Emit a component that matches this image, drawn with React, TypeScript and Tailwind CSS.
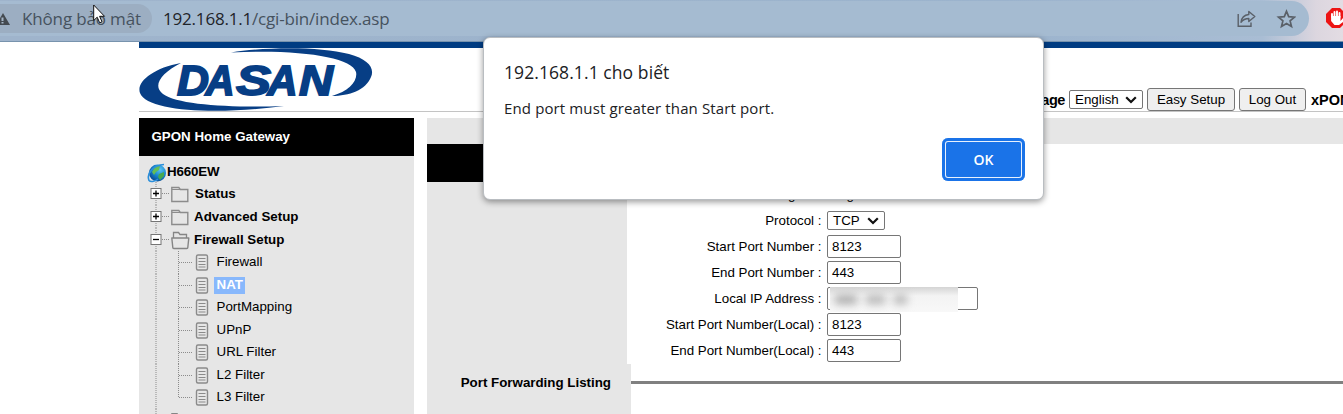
import React from "react";

const UI = "font-['Open_Sans','Noto_Sans',sans-serif]";

function DasanLogo() {
  return (
    <svg width="234" height="63" viewBox="0 0 234 63" className="block shrink-0">
      <g fill="#073e85">
        <path d="M92 4.500C125 -1 180 -2 210 6C229 11 236 20 232 29C227 42 210 48 193 48C210 43 219 33 217 24C213 9 160 1 92 4.500Z" />
        <path d="M42 15C14 20 -3 34 1 45C8 64 80 67 145 58C95 60 38 57 24 46C13 38 22 25 42 15Z" />
        <text
          y="46.500"
          fontFamily="Liberation Sans, sans-serif"
          fontWeight="700"
          fontStyle="italic"
          fontSize="43"
          stroke="#073e85"
          strokeWidth="1.800"
        >
          <tspan x="38" textLength="32" lengthAdjust="spacingAndGlyphs">D</tspan>
          <tspan x="66.500" textLength="29" lengthAdjust="spacingAndGlyphs">A</tspan>
          <tspan x="97" textLength="35" lengthAdjust="spacingAndGlyphs">S</tspan>
          <tspan x="128.500" textLength="30" lengthAdjust="spacingAndGlyphs">A</tspan>
          <tspan x="160" textLength="34" lengthAdjust="spacingAndGlyphs">N</tspan>
        </text>
      </g>
    </svg>
  );
}

function Toolbar() {
  return (
    <div className={`flex h-[42px] shrink-0 items-start border-b border-[#7893ad] bg-[linear-gradient(90deg,#9fb4cc_0%,#9bb3cd_75%,#a9bdd4_94%,#dcd6df_98%,#e3dce3_100%)] pt-px ${UI}`}>
      <div className="flex h-[35px] w-[1309px] items-center rounded-r-full bg-[#a5bbd1]">
        <div className="flex h-[29px] w-[152px] items-center rounded-r-full bg-[#9caec2] text-[#46525e]">
          <svg width="10" height="12" viewBox="0 0 10 12" className="block">
            <path d="M3 0L10 12H-4Z" fill="#444a50" />
            <path d="M1.500 4.500h2v3.500h-2zM1.500 9h2v1.500h-2z" fill="#a5b5c6" />
          </svg>
          <span className="ml-3 whitespace-nowrap text-[17px] leading-none tracking-[-0.15px]">Không bảo mật</span>
        </div>
        <span className="ml-[11px] whitespace-nowrap text-[17px] leading-none tracking-[-0.19px] text-[#46525e]">
          <span className="text-[#1f2429]">192.168.1.1</span>/cgi-bin/index.asp
        </span>
        <div className="ml-auto mr-[13px] flex items-center gap-[20px]">
          <svg width="20" height="18" viewBox="0 0 20 18" fill="none" stroke="#5a6068" strokeWidth="1.400">
            <path d="M2.200 4V16.300H15V12.500" />
            <path d="M12.800 1.500L18.800 6.500L12.800 11.500V8.500C9 8.500 6.800 9.800 5 12.300C5.500 8 8 5 12.800 4.500Z" strokeLinejoin="round" />
          </svg>
          <svg width="20" height="20" viewBox="0 0 20 20" fill="none" stroke="#5a6068" strokeWidth="1.700">
            <path d="M10.500 2.300L12.700 7.600L18.500 8.100L14.100 11.900L15.500 17.500L10.500 14.500L5.500 17.500L6.900 11.900L2.500 8.100L8.300 7.600Z" />
          </svg>
        </div>
      </div>
      <svg width="17" height="20" viewBox="0 0 17 20" className="ml-[17px] mt-[7px] shrink-0">
        <path d="M6 0H14L20 6V14L14 20H6L0 14V6Z" fill="#ed1414" />
        <path d="M6 9V6M8.500 9V4M11 9V3.500M13.500 9V5" stroke="#fff" strokeWidth="1.900" strokeLinecap="round" />
        <path d="M5.100 8H14.500V13L17 10V14L13 17H8.500L5.100 13Z" fill="#fff" />
      </svg>
    </div>
  );
}

type Kind = "plus" | "minus" | "leaf";

function Gutter({ kind, height, last }: { kind: Kind; height: number; last?: boolean }) {
  const c = Math.floor(height / 2);
  const dot = { stroke: "#8c8c8c", strokeDasharray: "1 1" };
  return (
    <svg width="74" height={height} viewBox={`0 0 74 ${height}`} fill="none" className="block shrink-0">
      <path d={`M17 0V${height}`} {...dot} />
      {kind === "leaf" ? (
        <>
          <path d={`M39.500 0V${last ? c + 1 : height}`} {...dot} />
          <path d={`M40 ${c + 0.5}H53`} {...dot} />
          <rect x="57.500" y={c - 7} width="11" height="15" rx="1.500" stroke="#8a8a8a" strokeWidth="1.400" />
          <path d={`M59.500 ${c - 3.5}h7M59.500 ${c - 0.5}h7M59.500 ${c + 2.5}h7M59.500 ${c + 5}h7`} stroke="#8a8a8a" />
        </>
      ) : (
        <>
          <path d={`M23 ${c + 0.5}H31`} {...dot} />
          <rect x="12" y={c - 4.5} width="10" height="10" fill="#fff" stroke="#757575" />
          <path d={`M14 ${c + 0.5}h6${kind === "plus" ? `M17 ${c - 2.5}v6` : ""}`} stroke="#000" strokeWidth="1.300" />
          {kind === "plus" ? (
            <>
              <path d={`M32.800 ${c - 5.5}h7l1.500 2h7.500v12h-16z`} stroke="#8c8c8c" strokeWidth="1.400" />
              <path d={`M33 ${c - 3.5}h8`} stroke="#8c8c8c" />
            </>
          ) : (
            <>
              <path d={`M34.500 ${c - 1}v-5.500h5l1.500 2h6.500v3.500`} stroke="#858585" strokeWidth="1.300" />
              <path d={`M32.800 ${c - 1}h17l-1 9.500a1 1 0 0 1 -1 1h-13a1 1 0 0 1 -1 -1z`} stroke="#858585" strokeWidth="1.400" strokeLinejoin="round" />
            </>
          )}
        </>
      )}
    </svg>
  );
}

const folders: { label: string; kind: Kind; cls: string }[] = [
  { label: "Status", kind: "plus", cls: "-ml-[18px]" },
  { label: "Advanced Setup", kind: "plus", cls: "-ml-[19px]" },
  { label: "Firewall Setup", kind: "minus", cls: "-ml-[19px]" },
];

const leaves = [
  { label: "Firewall", height: 23 },
  { label: "NAT", height: 22, active: true },
  { label: "PortMapping", height: 23 },
  { label: "UPnP", height: 22 },
  { label: "URL Filter", height: 23 },
  { label: "L2 Filter", height: 22 },
  { label: "L3 Filter", height: 23 },
];

function Globe() {
  return (
    <svg width="20" height="20" viewBox="0 0 20 20" className="mt-[3px] block shrink-0">
      <defs>
        <radialGradient id="globe" cx="0.65" cy="0.3" r="0.8">
          <stop offset="0" stopColor="#5bc4f5" />
          <stop offset="0.5" stopColor="#1685cc" />
          <stop offset="1" stopColor="#083e87" />
        </radialGradient>
      </defs>
      <circle cx="10.500" cy="10" r="8.500" fill="url(#globe)" />
      <path d="M8 3.500L13 3L12 7L9 9L7 12L5 9Z" fill="#65bd55" />
      <path d="M12 11L17 9L17 13L13 17L11 14Z" fill="#46a850" />
      <path d="M17 1.500C7 2 -1 10 2 17.500C4 19.500 9 18 11 16" fill="none" stroke="#2a8fdb" strokeWidth="1.600" />
    </svg>
  );
}

function Sidebar() {
  return (
    <aside className="flex w-[275px] shrink-0 flex-col bg-[#e6e6e6]">
      <div className="flex h-[38px] shrink-0 items-center bg-black pl-[12.500px] text-[13.33px] font-bold text-white">
        GPON Home Gateway
      </div>
      <div className="flex h-[26px] shrink-0 items-end pl-[8px]">
        <div className="flex h-[22px] items-center">
          <Globe />
          <span className="mt-px font-bold tracking-[-0.15px]">H660EW</span>
        </div>
      </div>
      {folders.map((f) => (
        <div key={f.label} className="flex h-[23px] shrink-0 items-center">
          <Gutter kind={f.kind} height={23} />
          <span className={`whitespace-nowrap font-bold ${f.cls}`}>{f.label}</span>
        </div>
      ))}
      {leaves.map((l, i) => (
        <div key={l.label} className="flex shrink-0 items-center">
          <Gutter kind="leaf" height={l.height} last={i === leaves.length - 1} />
          <span
            className={
              l.active
                ? "ml-px flex h-[17px] items-center bg-[#88b8fc] px-[2.500px] font-bold text-white"
                : "-mt-px ml-[3.500px] whitespace-nowrap"
            }
          >
            {l.label}
          </span>
        </div>
      ))}
      <svg width="74" height="5" viewBox="0 0 74 5" fill="none" className="block">
        <path d="M17 0V5" stroke="#8c8c8c" strokeDasharray="1 1" />
        <path d="M32.500 6V4.500h6l1.500 1.500" stroke="#858585" />
      </svg>
    </aside>
  );
}

function Chevron() {
  return (
    <svg width="12" height="8" viewBox="0 0 12 8" fill="none" stroke="#111" strokeWidth="2.200" className="block">
      <path d="M1.200 1.200L6 6L10.800 1.200" />
    </svg>
  );
}

function Row({ label, children }: { label: string; children: React.ReactNode }) {
  return (
    <div className="flex h-[26px] shrink-0 items-center">
      <span className="w-[196px] whitespace-nowrap pr-[1.500px] pt-[2px] text-right">{label} :</span>
      <div className="ml-[4px] flex items-center">{children}</div>
    </div>
  );
}

function Field({ value }: { value: string }) {
  return (
    <div className="flex h-[23px] w-[74px] items-center rounded-[2px] border border-[#767676] bg-white pl-[4px] pt-px">
      {value}
    </div>
  );
}

function Content() {
  return (
    <main className="flex min-w-0 flex-1 flex-col">
      <div className="h-[26px] shrink-0 bg-[#e6e6e6]" />
      <div className="flex h-[220px] shrink-0">
        <div className="w-[200px] shrink-0 bg-[#e6e6e6]">
          <div className="h-[38px] bg-black" />
        </div>
        <div className="flex flex-col pt-[37px]">
          <div className="flex h-[26px] items-center gap-[51px] pl-[161px] pt-px">
            <span>g</span>
            <span>g</span>
          </div>
          <Row label="Protocol">
            <div className="mt-px flex h-[19px] w-[58px] items-center justify-between rounded-[2px] border border-[#767676] bg-white pl-[5px] pr-[5px]">
              TCP
              <Chevron />
            </div>
          </Row>
          <Row label="Start Port Number"><Field value="8123" /></Row>
          <Row label="End Port Number"><Field value="443" /></Row>
          <Row label="Local IP Address">
            <div className="flex h-[23px] w-[151px] items-center rounded-[2px] border border-[#767676] bg-white pl-[2px]">
              <div className="mt-[2px] flex h-[25px] w-[128px] shrink-0 items-center gap-[9px] overflow-hidden bg-[linear-gradient(180deg,#d4d4d4,#f3f3f3_35%,#f8f8f8)] pl-[5px]">
                <div className="h-[9px] w-[22px] bg-[#aaa] blur-[4px]" />
                <div className="h-[9px] w-[19px] bg-[#b5b5b5] blur-[4px]" />
                <div className="h-[9px] w-[13px] bg-[#b5b5b5] blur-[4px]" />
              </div>
            </div>
          </Row>
          <Row label="Start Port Number(Local)"><Field value="8123" /></Row>
          <Row label="End Port Number(Local)"><Field value="443" /></Row>
        </div>
      </div>
      <div className="flex h-[50px] shrink-0">
        <div className="flex w-[204px] shrink-0 justify-end bg-[#e6e6e6] pr-[20px] pt-[11px]">
          <span className="whitespace-nowrap font-bold">Port Forwarding Listing</span>
        </div>
        <div className="mt-[17px] h-[3px] flex-1 bg-[#808080]" />
      </div>
    </main>
  );
}

function Dialog() {
  return (
    <div className={`absolute left-[483px] top-[37px] flex h-[163px] w-[561px] flex-col rounded-[7px] border border-[#b9bdc1] bg-white px-[20px] text-[#202124] shadow-[0_2px_6px_rgba(0,0,0,0.4)] ${UI}`}>
      <div className="mt-[23px] whitespace-nowrap text-[17.5px] leading-[22px] tracking-[0.08px]">192.168.1.1 cho biết</div>
      <div className="mt-[15px] whitespace-nowrap text-[15px] leading-[20px] tracking-[0.13px]">End port must greater than Start port.</div>
      <button className="ml-auto mt-[20px] -mr-[2px] flex h-[43px] w-[83px] shrink-0 items-center justify-center rounded-[6px] bg-[#1a73e8] text-[14px] font-semibold text-white shadow-[inset_0_0_0_3px_#1a73e8,inset_0_0_0_4px_#e8f1fd]">
        OK
      </button>
    </div>
  );
}

export default function App() {
  return (
    <div className="relative flex h-[414px] w-[1343px] flex-col overflow-hidden bg-white font-['Liberation_Sans',Arial,sans-serif] text-[13.33px] leading-[16px] text-black">
      <Toolbar />
      <div className="flex flex-1 flex-col pl-[139px]">
        <div className="h-[6px] shrink-0 bg-[#003c82]" />
        <header className="flex h-[64px] shrink-0 items-start border-b border-[#c4c4c4]">
          <DasanLogo />
          <div className="ml-[627px] mt-[40px] flex h-[23px] items-center">
            <span className="flex w-[65px] justify-end whitespace-nowrap text-[14.5px] font-bold tracking-[-0.4px]">Language</span>
            <div className="ml-[4px] flex h-[19px] w-[74px] items-center justify-between rounded-[2px] border border-[#767676] bg-white pl-[5px] pr-[5px]">
              English
              <Chevron />
            </div>
            <button className="ml-[4px] h-[23px] w-[88px] rounded-[3px] border border-[#767676] bg-[#efefef]">Easy Setup</button>
            <button className="ml-[4px] h-[23px] w-[67px] rounded-[3px] border border-[#767676] bg-[#efefef]">Log Out</button>
            <span className="ml-[5px] whitespace-nowrap text-[14.5px] font-bold">xPON</span>
          </div>
        </header>
        <div className="mt-[6px] flex flex-1 gap-[13px]">
          <Sidebar />
          <Content />
        </div>
      </div>
      <Dialog />
      <svg width="14" height="20" viewBox="0 0 14 20" className="absolute left-[93px] top-[4px]">
        <path d="M0.700 1V16.500L4.200 13.200L6.700 18.800L9 17.800L6.600 12.300H11.500Z" fill="#fff" stroke="#111" strokeWidth="1" />
      </svg>
    </div>
  );
}
